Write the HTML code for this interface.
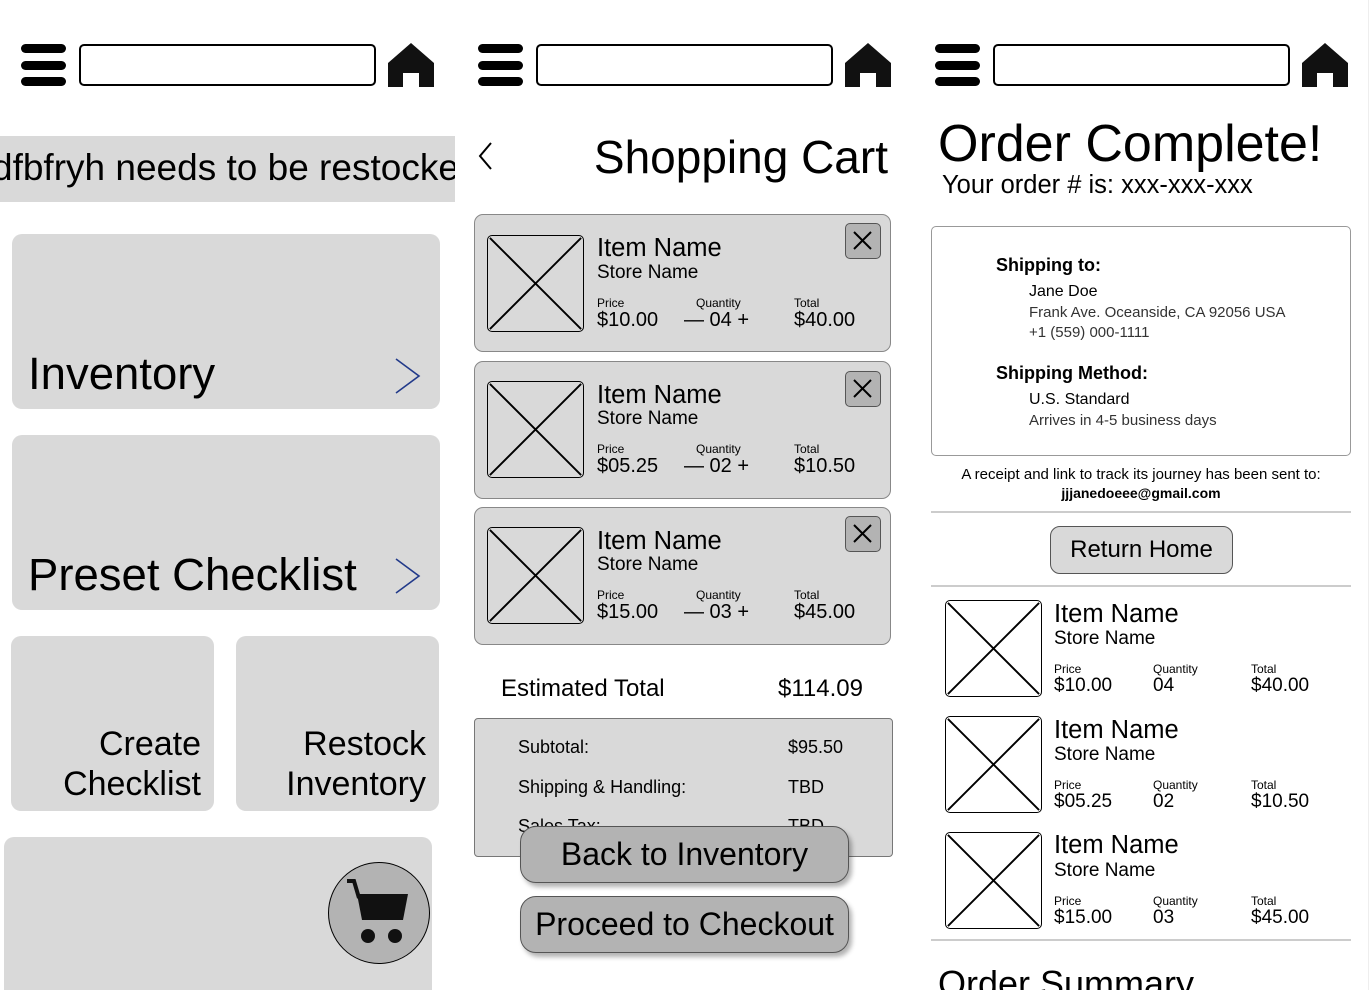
<!DOCTYPE html>
<html><head><meta charset="utf-8"><style>
*{box-sizing:border-box;margin:0;padding:0}
html{width:1372px;height:990px;overflow:hidden}
body{width:1372px;height:990px;overflow:hidden;background:#fff;font-family:"Liberation Sans",sans-serif;color:#000;position:relative}
.a{position:absolute}
.bar{position:absolute;width:45px;height:9px;border-radius:5px;background:#000}
.search{position:absolute;top:44px;height:42px;border:2px solid #000;border-radius:5px;width:297px}
.g{background:#d9d9d9}
.card{position:absolute;left:474px;width:417px;height:138px;background:#d9d9d9;border:1.5px solid #888;border-radius:9px}
.img{position:absolute;width:97px;height:97px;border:1.5px solid #000;border-radius:5px;overflow:hidden}
.img svg{width:100%;height:100%;display:block}
.t{position:absolute;white-space:nowrap}
.xbtn{position:absolute;width:36px;height:36px;background:#b3b3b3;border:1.5px solid #555;border-radius:5px}
.btn{position:absolute;left:520px;width:329px;height:57px;background:#b3b3b3;border:1.5px solid #555;border-radius:16px;box-shadow:3px 4px 5px rgba(0,0,0,.3);font-size:32px;text-align:center;line-height:54px}
.in{font-size:25.5px}.sn{font-size:19px}
</style></head><body>

<div class="bar" style="left:21px;top:44px"></div><div class="bar" style="left:21px;top:61px"></div><div class="bar" style="left:21px;top:77px"></div>
<div class="search" style="left:79px"></div>
<svg class="a" style="left:388px;top:43px" width="46" height="44" viewBox="0 0 46 44"><path d="M23 0 L46 20 V44 H31 V30 H15 V44 H0 V20 Z" fill="#111"/></svg>

<div class="bar" style="left:478px;top:44px"></div><div class="bar" style="left:478px;top:61px"></div><div class="bar" style="left:478px;top:77px"></div>
<div class="search" style="left:536px"></div>
<svg class="a" style="left:845px;top:43px" width="46" height="44" viewBox="0 0 46 44"><path d="M23 0 L46 20 V44 H31 V30 H15 V44 H0 V20 Z" fill="#111"/></svg>

<div class="bar" style="left:935px;top:44px"></div><div class="bar" style="left:935px;top:61px"></div><div class="bar" style="left:935px;top:77px"></div>
<div class="search" style="left:993px"></div>
<svg class="a" style="left:1302px;top:43px" width="46" height="44" viewBox="0 0 46 44"><path d="M23 0 L46 20 V44 H31 V30 H15 V44 H0 V20 Z" fill="#111"/></svg>

<!-- panel 1 -->
<div class="a g" style="left:0;top:136px;width:455px;height:66px;overflow:hidden"><div class="t" style="left:-8px;top:11px;font-size:37px">dfbfryh needs to be restocked</div></div>
<div class="a g" style="left:12px;top:234px;width:428px;height:175px;border-radius:10px"></div>
<div class="t" style="left:28px;top:348px;font-size:45.5px">Inventory</div>
<svg class="a" style="left:393px;top:357px" width="30" height="38"><path d="M3 2 L26 19 L3 36" fill="none" stroke="#223a8a" stroke-width="1.6"/></svg>
<div class="a g" style="left:12px;top:435px;width:428px;height:175px;border-radius:10px"></div>
<div class="t" style="left:28px;top:549px;font-size:45.5px">Preset Checklist</div>
<svg class="a" style="left:393px;top:557px" width="30" height="38"><path d="M3 2 L26 19 L3 36" fill="none" stroke="#223a8a" stroke-width="1.6"/></svg>
<div class="a g" style="left:11px;top:636px;width:203px;height:175px;border-radius:10px"></div>
<div class="t" style="right:1171px;top:724px;font-size:34px;text-align:right;line-height:40px">Create<br>Checklist</div>
<div class="a g" style="left:236px;top:636px;width:203px;height:175px;border-radius:10px"></div>
<div class="t" style="right:946px;top:724px;font-size:34px;text-align:right;line-height:40px">Restock<br>Inventory</div>
<div class="a g" style="left:4px;top:837px;width:428px;height:170px;border-radius:10px"></div>
<div class="a" style="left:328px;top:862px;width:102px;height:102px;border-radius:50%;background:#b3b3b3;border:1.5px solid #000"></div>
<svg class="a" style="left:344px;top:878px" width="66" height="70" viewBox="0 0 66 70"><path d="M3 3 H10 L15 20" fill="none" stroke="#111" stroke-width="4"/><path d="M13 16 H64 L59 42 H18 Z" fill="#111"/><circle cx="24" cy="58" r="7" fill="#111"/><circle cx="51" cy="58" r="7" fill="#111"/></svg>

<!-- panel 2 -->
<svg class="a" style="left:476px;top:141px" width="20" height="30"><path d="M15 2 L4 15 L15 28" fill="none" stroke="#000" stroke-width="2"/></svg>
<div class="t" style="right:484px;top:130px;font-size:46px">Shopping Cart</div>

<div class="card" style="top:214px"></div>
<div class="card" style="top:361px"></div>
<div class="card" style="top:507px"></div>

<div class="img" style="left:487px;top:235px"><svg viewBox="0 0 100 100" preserveAspectRatio="none"><path d="M2 2L98 98M98 2L2 98" stroke="#000" stroke-width="2"/></svg></div>
<div class="xbtn" style="left:845px;top:223px"><svg width="33" height="33"><path d="M8 8L25 25M25 8L8 25" stroke="#000" stroke-width="2"/></svg></div>
<div class="t in" style="left:597px;top:234px">Item Name</div>
<div class="t sn" style="left:597px;top:262px">Store Name</div>
<div class="t" style="left:597px;top:296px;font-size:12px">Price</div>
<div class="t" style="left:696px;top:296px;font-size:12px">Quantity</div>
<div class="t" style="left:794px;top:296px;font-size:12px">Total</div>
<div class="t" style="left:597px;top:309px;font-size:20px">$10.00</div>
<div class="t" style="left:684px;top:309px;font-size:20px">— 04 +</div>
<div class="t" style="left:794px;top:309px;font-size:20px">$40.00</div>

<div class="img" style="left:487px;top:381px"><svg viewBox="0 0 100 100" preserveAspectRatio="none"><path d="M2 2L98 98M98 2L2 98" stroke="#000" stroke-width="2"/></svg></div>
<div class="xbtn" style="left:845px;top:371px"><svg width="33" height="33"><path d="M8 8L25 25M25 8L8 25" stroke="#000" stroke-width="2"/></svg></div>
<div class="t in" style="left:597px;top:381px">Item Name</div>
<div class="t sn" style="left:597px;top:408px">Store Name</div>
<div class="t" style="left:597px;top:442px;font-size:12px">Price</div>
<div class="t" style="left:696px;top:442px;font-size:12px">Quantity</div>
<div class="t" style="left:794px;top:442px;font-size:12px">Total</div>
<div class="t" style="left:597px;top:455px;font-size:20px">$05.25</div>
<div class="t" style="left:684px;top:455px;font-size:20px">— 02 +</div>
<div class="t" style="left:794px;top:455px;font-size:20px">$10.50</div>

<div class="img" style="left:487px;top:527px"><svg viewBox="0 0 100 100" preserveAspectRatio="none"><path d="M2 2L98 98M98 2L2 98" stroke="#000" stroke-width="2"/></svg></div>
<div class="xbtn" style="left:845px;top:516px"><svg width="33" height="33"><path d="M8 8L25 25M25 8L8 25" stroke="#000" stroke-width="2"/></svg></div>
<div class="t in" style="left:597px;top:527px">Item Name</div>
<div class="t sn" style="left:597px;top:554px">Store Name</div>
<div class="t" style="left:597px;top:588px;font-size:12px">Price</div>
<div class="t" style="left:696px;top:588px;font-size:12px">Quantity</div>
<div class="t" style="left:794px;top:588px;font-size:12px">Total</div>
<div class="t" style="left:597px;top:601px;font-size:20px">$15.00</div>
<div class="t" style="left:684px;top:601px;font-size:20px">— 03 +</div>
<div class="t" style="left:794px;top:601px;font-size:20px">$45.00</div>

<div class="t" style="left:501px;top:675px;font-size:24px">Estimated Total</div>
<div class="t" style="left:778px;top:675px;font-size:24px">$114.09</div>
<div class="a g" style="left:474px;top:718px;width:419px;height:139px;border:1.5px solid #777;border-radius:4px"></div>
<div class="t" style="left:518px;top:737px;font-size:18px">Subtotal:</div>
<div class="t" style="left:788px;top:737px;font-size:18px">$95.50</div>
<div class="t" style="left:518px;top:777px;font-size:18px">Shipping &amp; Handling:</div>
<div class="t" style="left:788px;top:777px;font-size:18px">TBD</div>
<div class="t" style="left:518px;top:816px;font-size:18px">Sales Tax:</div>
<div class="t" style="left:788px;top:816px;font-size:18px">TBD</div>
<div class="btn" style="top:826px">Back to Inventory</div>
<div class="btn" style="top:896px">Proceed to Checkout</div>

<!-- panel 3 -->
<div class="t" style="left:938px;top:114px;font-size:52px">Order Complete!</div>
<div class="t" style="left:942px;top:171px;font-size:25.5px">Your order # is: xxx-xxx-xxx</div>
<div class="a" style="left:931px;top:226px;width:420px;height:230px;border:1.5px solid #999;border-radius:5px"></div>
<div class="t" style="left:996px;top:255px;font-size:18px;font-weight:bold">Shipping to:</div>
<div class="t" style="left:1029px;top:283px;font-size:16px">Jane Doe</div>
<div class="t" style="left:1029px;top:304px;font-size:15px;color:#333">Frank Ave. Oceanside, CA 92056 USA</div>
<div class="t" style="left:1029px;top:324px;font-size:15px;color:#333">+1 (559) 000-1111</div>
<div class="t" style="left:996px;top:363px;font-size:18px;font-weight:bold">Shipping Method:</div>
<div class="t" style="left:1029px;top:391px;font-size:16px">U.S. Standard</div>
<div class="t" style="left:1029px;top:412px;font-size:15px;color:#333">Arrives in 4-5 business days</div>
<div class="t" style="left:931px;width:420px;top:466px;font-size:15px;text-align:center">A receipt and link to track its journey has been sent to:</div>
<div class="t" style="left:931px;width:420px;top:485px;font-size:14px;text-align:center;font-weight:bold">jjjanedoeee@gmail.com</div>
<div class="a" style="left:931px;top:511px;width:420px;height:2px;background:#ccc"></div>
<div class="a g" style="left:1050px;top:526px;width:183px;height:48px;border:1.5px solid #555;border-radius:10px;font-size:24px;text-align:center;line-height:45px">Return Home</div>
<div class="a" style="left:931px;top:585px;width:420px;height:2px;background:#ccc"></div>

<div class="img" style="left:945px;top:600px"><svg viewBox="0 0 100 100" preserveAspectRatio="none"><path d="M2 2L98 98M98 2L2 98" stroke="#000" stroke-width="2"/></svg></div>
<div class="t in" style="left:1054px;top:600px">Item Name</div>
<div class="t sn" style="left:1054px;top:628px">Store Name</div>
<div class="t" style="left:1054px;top:662px;font-size:12px">Price</div>
<div class="t" style="left:1153px;top:662px;font-size:12px">Quantity</div>
<div class="t" style="left:1251px;top:662px;font-size:12px">Total</div>
<div class="t" style="left:1054px;top:675px;font-size:19px">$10.00</div>
<div class="t" style="left:1153px;top:675px;font-size:19px">04</div>
<div class="t" style="left:1251px;top:675px;font-size:19px">$40.00</div>

<div class="img" style="left:945px;top:716px"><svg viewBox="0 0 100 100" preserveAspectRatio="none"><path d="M2 2L98 98M98 2L2 98" stroke="#000" stroke-width="2"/></svg></div>
<div class="t in" style="left:1054px;top:716px">Item Name</div>
<div class="t sn" style="left:1054px;top:744px">Store Name</div>
<div class="t" style="left:1054px;top:778px;font-size:12px">Price</div>
<div class="t" style="left:1153px;top:778px;font-size:12px">Quantity</div>
<div class="t" style="left:1251px;top:778px;font-size:12px">Total</div>
<div class="t" style="left:1054px;top:791px;font-size:19px">$05.25</div>
<div class="t" style="left:1153px;top:791px;font-size:19px">02</div>
<div class="t" style="left:1251px;top:791px;font-size:19px">$10.50</div>

<div class="img" style="left:945px;top:832px"><svg viewBox="0 0 100 100" preserveAspectRatio="none"><path d="M2 2L98 98M98 2L2 98" stroke="#000" stroke-width="2"/></svg></div>
<div class="t in" style="left:1054px;top:831px">Item Name</div>
<div class="t sn" style="left:1054px;top:860px">Store Name</div>
<div class="t" style="left:1054px;top:894px;font-size:12px">Price</div>
<div class="t" style="left:1153px;top:894px;font-size:12px">Quantity</div>
<div class="t" style="left:1251px;top:894px;font-size:12px">Total</div>
<div class="t" style="left:1054px;top:907px;font-size:19px">$15.00</div>
<div class="t" style="left:1153px;top:907px;font-size:19px">03</div>
<div class="t" style="left:1251px;top:907px;font-size:19px">$45.00</div>
<div class="a" style="left:931px;top:939px;width:420px;height:2px;background:#ccc"></div>
<div class="t" style="left:938px;top:963px;font-size:36px">Order Summary</div>
<div class="a" style="left:1368px;top:0;width:1px;height:990px;background:#eee"></div>
</body></html>
